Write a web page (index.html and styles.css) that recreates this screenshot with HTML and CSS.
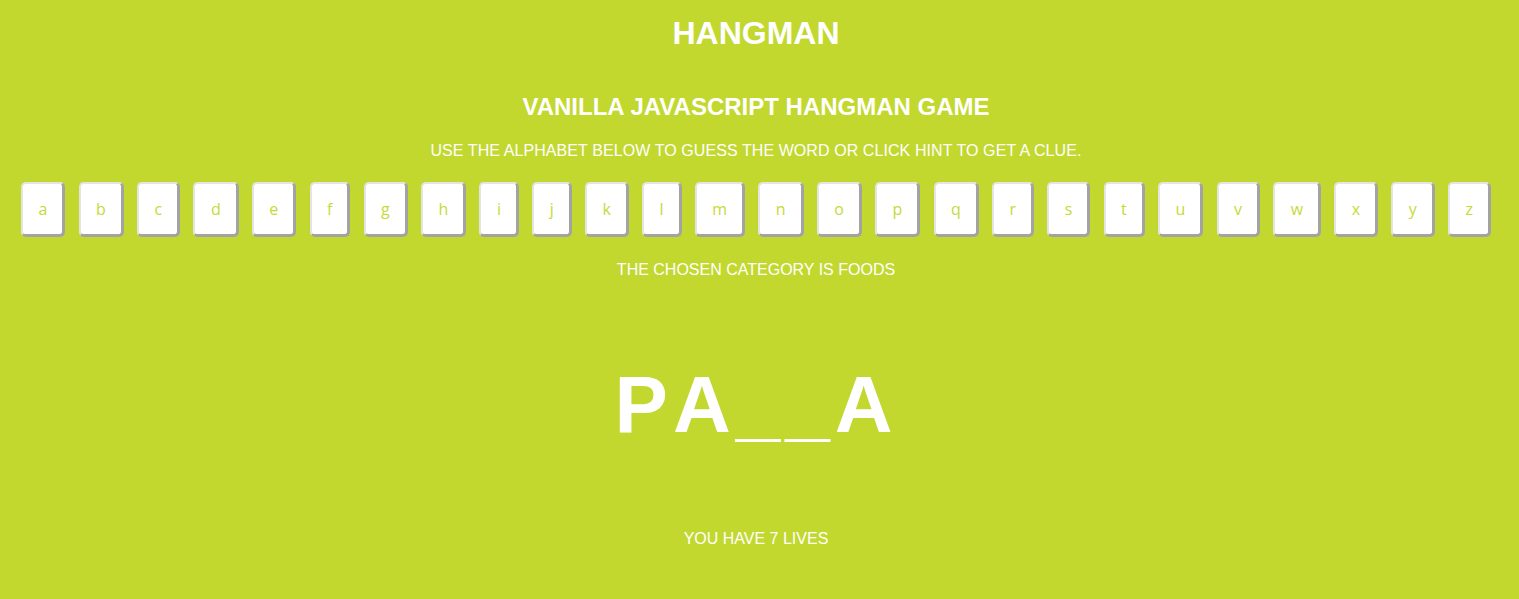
FILE: index.html
```html
<!DOCTYPE html>
<html>
<head>
<meta charset="utf-8">
<title>Hangman</title>
<link rel="stylesheet" href="styles.css">
</head>
<body>
<div class="wrapper">
  <h1 class="title">HANGMAN</h1>
  <h2 class="subtitle">VANILLA JAVASCRIPT HANGMAN GAME</h2>
  <p class="instructions">USE THE ALPHABET BELOW TO GUESS THE WORD OR CLICK HINT TO GET A CLUE.</p>
  <ul class="alphabet">
    <li class="key">a</li><li class="key">b</li><li class="key">c</li><li class="key">d</li><li class="key">e</li><li class="key">f</li><li class="key">g</li><li class="key">h</li><li class="key">i</li><li class="key">j</li><li class="key">k</li><li class="key">l</li><li class="key">m</li><li class="key">n</li><li class="key">o</li><li class="key">p</li><li class="key">q</li><li class="key">r</li><li class="key">s</li><li class="key">t</li><li class="key">u</li><li class="key">v</li><li class="key">w</li><li class="key">x</li><li class="key">y</li><li class="key">z</li>
  </ul>
  <p class="category">THE CHOSEN CATEGORY IS FOODS</p>
  <div class="word"><span>P</span><span>A</span><span>_</span><span>_</span><span>A</span></div>
  <p class="lives">YOU HAVE 7 LIVES</p>
</div>
</body>
</html>
```
FILE: styles.css
```css
html, body {
  margin: 0;
  padding: 0;
  background: #c2d82f;
}
body {
  font-family: "Liberation Sans", Arial, sans-serif;
  color: #ffffff;
  min-height: 599px;
}
.wrapper {
  display: flex;
  flex-direction: column;
  align-items: center;
  text-align: center;
  padding-right: 7px;
}
.title {
  margin: 15px 0 0;
  font-size: 32px;
  line-height: 37px;
  font-weight: bold;
}
.subtitle {
  margin: 41px 0 0;
  font-size: 24px;
  line-height: 28px;
  font-weight: bold;
}
.instructions {
  margin: 21px 0 0;
  font-size: 16px;
  line-height: 18px;
  letter-spacing: 0.08px;
}
.alphabet {
  list-style: none;
  margin: 22px 0 0;
  padding: 0;
  display: flex;
  justify-content: center;
  gap: 13.2px;
}
.key {
  box-sizing: border-box;
  height: 55px;
  padding: 0 15px 0 15.5px;
  display: flex;
  align-items: center;
  justify-content: center;
  background: #ffffff;
  color: #c5da38;
  font-family: "Open Sans", "DejaVu Sans", sans-serif;
  font-size: 16px;
  border-radius: 5px;
  border-style: solid;
  border-width: 2px 3px 3px 2px;
  border-color: #e4e4e4 #a3a3a3 #a3a3a3 #e4e4e4;
}
.category {
  margin: 24px 0 0;
  font-size: 16px;
  line-height: 18px;
}
.word {
  margin: 78px 0 0;
  font-size: 80px;
  line-height: 96px;
  font-weight: bold;
  letter-spacing: 5px;
  display: flex;
}
.lives {
  margin: 77px 0 0;
  font-size: 16px;
  line-height: 18px;
}
```
